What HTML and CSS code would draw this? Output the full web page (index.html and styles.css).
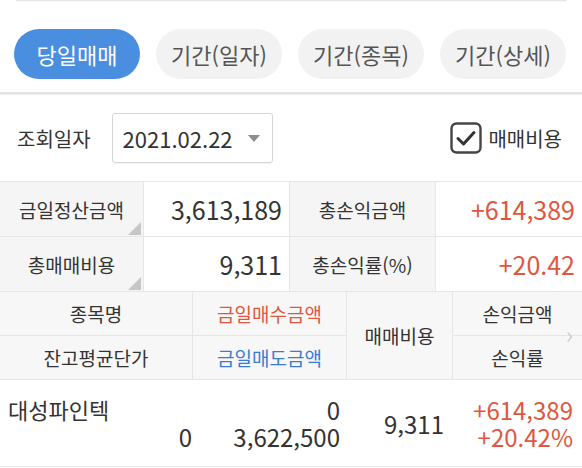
FILE: index.html
```html
<!DOCTYPE html>
<html lang="ko">
<head>
<meta charset="utf-8">
<link rel="stylesheet" href="styles.css">
</head>
<body>
<div class="topline"></div>
<div class="tabs">
  <div class="tab active">당일매매</div>
  <div class="tab">기간(일자)</div>
  <div class="tab">기간(종목)</div>
  <div class="tab">기간(상세)</div>
</div>
<div class="divider"></div>
<div class="query">
  <span class="qlabel">조회일자</span>
  <div class="select">
    <span class="date">2021.02.22</span>
    <span class="caret"></span>
  </div>
  <div class="check">
    <svg width="32" height="32" viewBox="0 0 32 32">
      <rect x="1.5" y="1.5" width="29" height="29" rx="5" ry="5" fill="none" stroke="#454545" stroke-width="2.4"/>
      <path d="M8 16.5 L13.5 22 L24 10.5" fill="none" stroke="#333" stroke-width="3" stroke-linecap="round" stroke-linejoin="round"/>
    </svg>
    <span class="clabel">매매비용</span>
  </div>
</div>
<div class="summary">
  <div class="slabel tri">금일정산금액</div>
  <div class="svalue">3,613,189</div>
  <div class="slabel">총손익금액</div>
  <div class="svalue red">+614,389</div>
  <div class="slabel tri">총매매비용</div>
  <div class="svalue">9,311</div>
  <div class="slabel">총손익률(%)</div>
  <div class="svalue red">+20.42</div>
</div>
<div class="header">
  <div class="h">종목명</div>
  <div class="h red">금일매수금액</div>
  <div class="h span2">매매비용</div>
  <div class="h">손익금액</div>
  <div class="h">잔고평균단가</div>
  <div class="h blue">금일매도금액</div>
  <div class="h">손익률</div>
  <span class="chev">›</span>
</div>
<div class="datarow">
  <div class="d1">
    <span class="name">대성파인텍</span>
    <span class="num">0</span>
  </div>
  <div class="d2">
    <span class="num">0</span>
    <span class="num">3,622,500</span>
  </div>
  <div class="d3">
    <span class="num">9,311</span>
  </div>
  <div class="d4 red">
    <span class="num">+614,389</span>
    <span class="num">+20.42%</span>
  </div>
</div>
</body>
</html>
```

FILE: styles.css
```css
html, body {
  margin: 0;
  padding: 0;
  background: #fff;
}
body {
  width: 582px;
  height: 468px;
  overflow: hidden;
  font-family: "Noto Sans CJK KR", "Noto Sans", sans-serif;
  color: #333;
}
.topline {
  height: 1px;
  margin: 0 16px 0 16px;
  background: #e6e6e6;
  box-shadow: 0 1px 1px rgba(0,0,0,0.04);
}
.tabs {
  display: flex;
  gap: 16px;
  padding: 28px 14px 0 14px;
}
.tab {
  width: 126px;
  height: 50px;
  border-radius: 25px;
  background: #f2f2f2;
  color: #555;
  font-size: 22px;
  display: flex;
  align-items: center;
  justify-content: center;
}
.tab.active {
  background: #4a8ee0;
  color: #fff;
}
.divider {
  margin-top: 13px;
  height: 2px;
  background: #e3e3e3;
  border-bottom: 1px solid #f2f2f2;
}
.query {
  height: 86px;
  display: flex;
  align-items: center;
  padding: 0 17px;
}
.qlabel {
  font-size: 20px;
  color: #333;
}
.select {
  margin-left: 21px;
  width: 149px;
  height: 48px;
  border: 1px solid #d6d6d6;
  border-radius: 3px;
  display: flex;
  align-items: center;
  padding-left: 10px;
  box-sizing: content-box;
  box-shadow: 0 1px 1px rgba(0,0,0,0.05);
}
.date {
  font-size: 22px;
  color: #333;
}
.caret {
  margin-left: 15px;
  width: 0;
  height: 0;
  border-left: 6px solid transparent;
  border-right: 6px solid transparent;
  border-top: 7px solid #8c8c8c;
}
.check {
  margin-left: auto;
  display: flex;
  align-items: center;
  gap: 6px;
  margin-right: 3px;
}
.check svg {
  display: block;
}
.clabel {
  font-size: 20px;
}
.summary {
  display: grid;
  grid-template-columns: 143px 145px 145px 146px;
  grid-template-rows: 54px 54px;
  gap: 1px;
  background: #e6e6e6;
  border-top: 1px solid #e6e6e6;
  border-bottom: 1px solid #e6e6e6;
}
.slabel {
  background: #f5f5f5;
  font-size: 19px;
  display: flex;
  align-items: center;
  justify-content: center;
  position: relative;
}
.slabel.tri::after {
  content: "";
  position: absolute;
  right: 2px;
  bottom: 1px;
  width: 0;
  height: 0;
  border-left: 13px solid transparent;
  border-bottom: 13px solid #c6c6c6;
}
.svalue {
  background: #fff;
  font-size: 25px;
  display: flex;
  align-items: center;
  justify-content: flex-end;
  padding-right: 7px;
}
.red { color: #e0563f; }
.blue { color: #3a7dcf; }
.header {
  display: grid;
  grid-template-columns: 192px 153px 105px 129px;
  grid-template-rows: 43px 43px;
  gap: 1px;
  background: #e6e6e6;
  border-bottom: 1px solid #e6e6e6;
  position: relative;
}
.h {
  background: #f7f7f7;
  font-size: 19px;
  display: flex;
  align-items: center;
  justify-content: center;
}
.h.span2 {
  grid-row: span 2;
  grid-column: 3;
}
.chev {
  position: absolute;
  right: 9px;
  top: 30px;
  font-size: 24px;
  color: #cfcfcf;
  line-height: 1;
}
.datarow {
  display: grid;
  grid-template-columns: 192px 155px 106px 129px;
  height: 86px;
  border-bottom: 1px solid #e6e6e6;
}
.datarow > div {
  display: flex;
  flex-direction: column;
  justify-content: center;
  align-items: flex-end;
}
.num {
  font-size: 24px;
  line-height: 27px;
  height: 27px;
}
.d1 {
  align-items: stretch !important;
}
.d1 .name {
  font-size: 22px;
  line-height: 27px;
  height: 27px;
  padding-left: 8px;
}
.d1 .num {
  text-align: right;
}
.d2 { padding-right: 7px; }
.d3 { padding-right: 9px; }
.d4 { padding-right: 9px; }
```
